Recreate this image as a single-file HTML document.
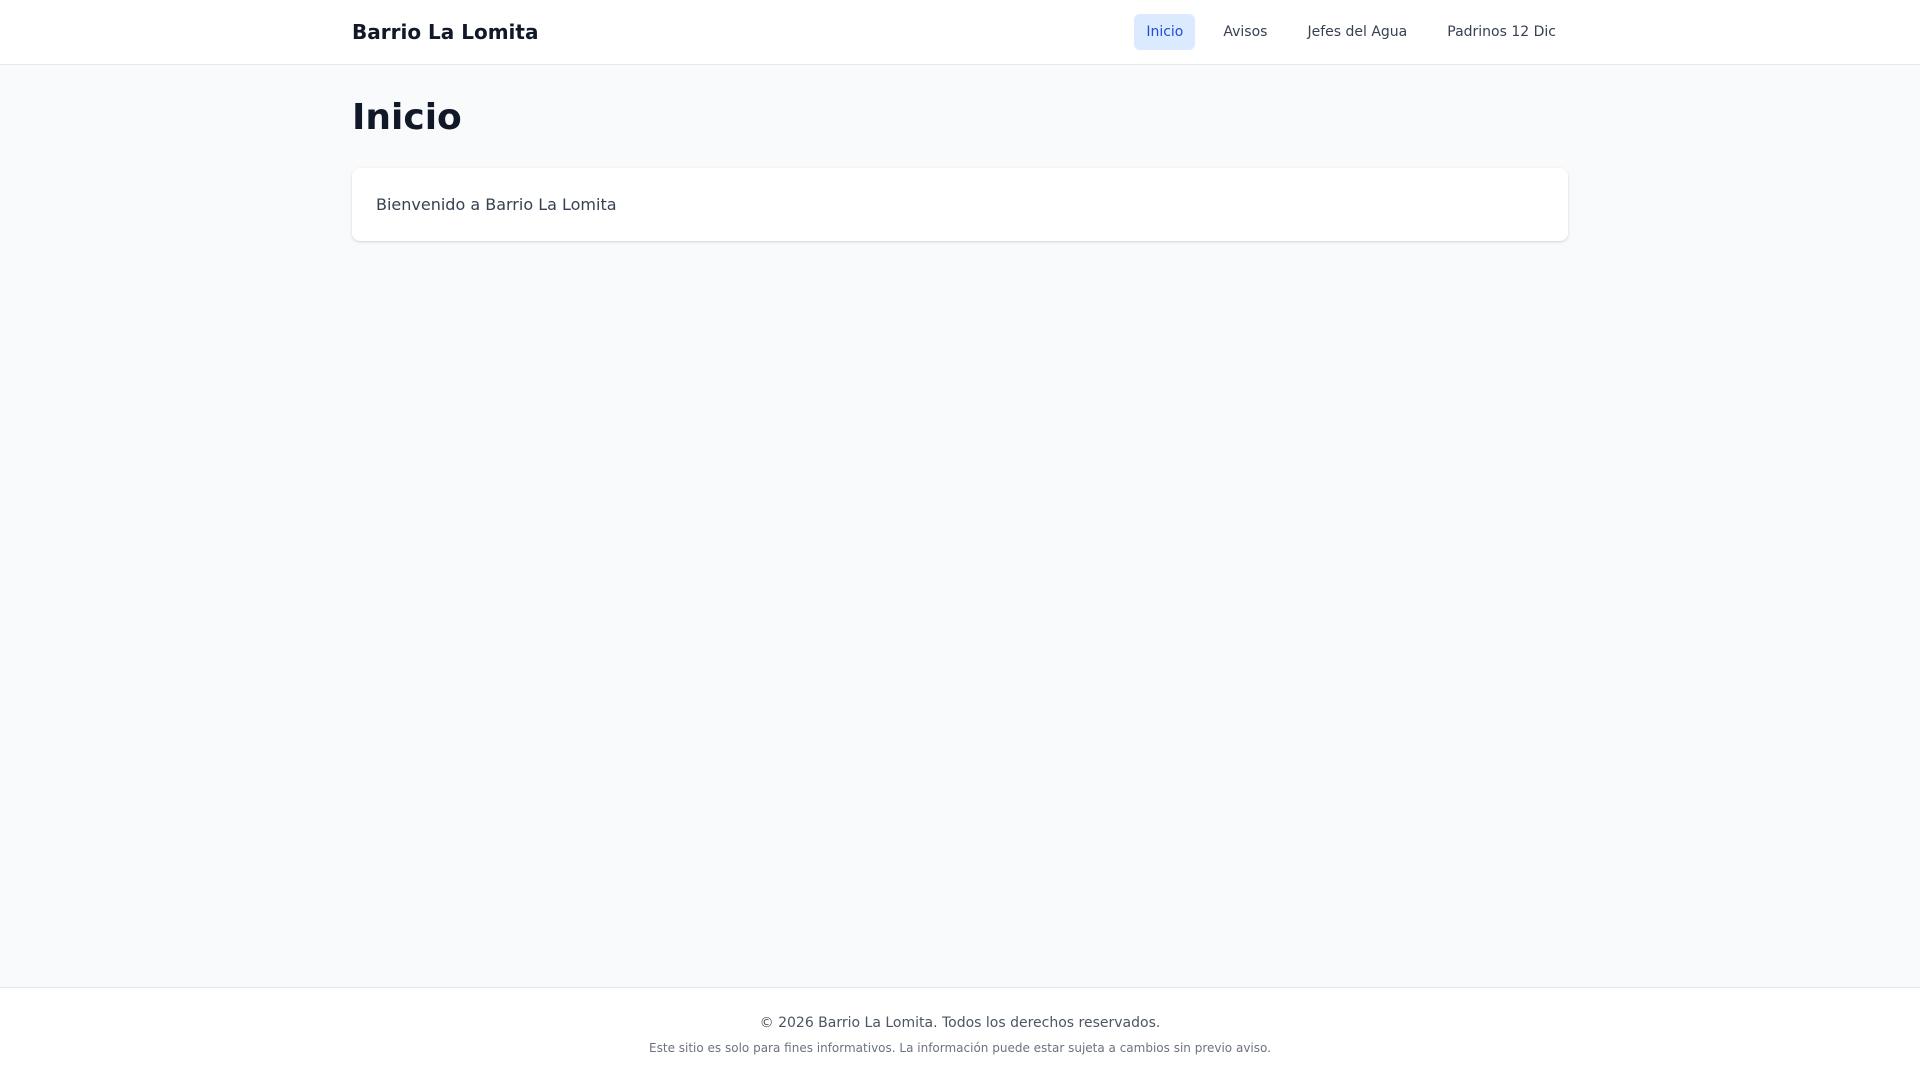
<!DOCTYPE html>
<html><head><meta charset="utf-8"><style>
*{box-sizing:border-box;margin:0;padding:0}
html,body{height:1080px;overflow:hidden}
body{font-family:"DejaVu Sans","Liberation Sans",sans-serif;background:#f9fafb;color:#111827;display:flex;flex-direction:column}
header{background:#fff;border-bottom:1px solid #e5e7eb;height:65px;flex:none}
.wrap{max-width:1216px;margin:0 auto;}
header .wrap{display:flex;align-items:center;justify-content:space-between;height:64px}
.brand{font-size:20px;font-weight:bold;color:#111827}
nav{display:flex;gap:16px}
nav a{font-size:14px;color:#374151;padding:10px 12px 9px;border-radius:6px;text-decoration:none;line-height:17px;margin-top:0}
nav a.active{background:#dbeafe;color:#1d4ed8}
main{flex:1}
h1{font-size:36px;font-weight:bold;line-height:44px;margin-top:0;padding-top:31px}
.card{background:#fff;border-radius:8px;box-shadow:0 1px 3px rgba(0,0,0,.1),0 1px 2px rgba(0,0,0,.06);margin-top:28px;height:73px;padding:0 24px;display:flex;align-items:center;font-size:16px;color:#374151}
footer{background:#fff;border-top:1px solid #e5e7eb;height:93px;flex:none;text-align:center;padding-top:25px}
footer p{font-size:14px;color:#4b5563;line-height:20px}
footer p.s{font-size:12px;color:#6b7280;margin-top:7px;line-height:16px}
</style></head><body>
<header><div class="wrap"><div class="brand">Barrio La Lomita</div>
<nav><a class="active">Inicio</a><a>Avisos</a><a>Jefes del Agua</a><a>Padrinos 12 Dic</a></nav></div></header>
<main><div class="wrap"><h1>Inicio</h1><div class="card">Bienvenido a Barrio La Lomita</div></div></main>
<footer><p>© 2026 Barrio La Lomita. Todos los derechos reservados.</p>
<p class="s">Este sitio es solo para fines informativos. La información puede estar sujeta a cambios sin previo aviso.</p></footer>
</body></html>
